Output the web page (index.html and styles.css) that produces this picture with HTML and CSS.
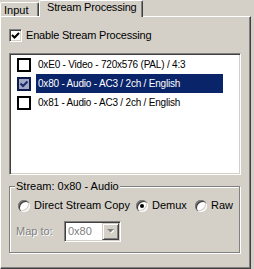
FILE: index.html
```html
<!DOCTYPE html>
<html lang="en">
<head>
    <meta charset="UTF-8">
    <title>Stream Processing</title>
    <link rel="stylesheet" href="styles.css">
</head>
<body>

<div class="tabs">
    <div class="tab tab-input">Input</div>
    <div class="tab tab-active">Stream Processing</div>
</div>

<div class="page">
    <div class="check-row">
        <span class="checkbox">
            <svg width="9" height="9" viewBox="0 0 9 9"><path d="M1 4 L3.5 6.5 L8 2" fill="none" stroke="#000" stroke-width="2"/></svg>
        </span>
        <span class="check-label">Enable Stream Processing</span>
    </div>

    <div class="list">
        <div class="row">
            <span class="state"></span>
            <span class="row-text">0xE0 - Video - 720x576 (PAL) / 4:3</span>
        </div>
        <div class="row">
            <span class="state state-on">
                <svg width="10" height="10" viewBox="0 0 10 10"><path d="M1.5 4.5 L4 7 L8.5 2.5" fill="none" stroke="#1c2c6c" stroke-width="2"/></svg>
            </span>
            <span class="row-text sel">0x80 - Audio - AC3 / 2ch / English</span>
        </div>
        <div class="row">
            <span class="state"></span>
            <span class="row-text">0x81 - Audio - AC3 / 2ch / English</span>
        </div>
    </div>

    <div class="group">
        <span class="group-title">Stream: 0x80 - Audio</span>
        <div class="radio-row">
            <label class="option opt-direct"><span class="radio"></span>Direct Stream Copy</label>
            <label class="option opt-demux"><span class="radio on"></span>Demux</label>
            <label class="option"><span class="radio"></span>Raw</label>
        </div>
        <div class="map-row">
            <span class="map-label disabled">Map to:</span>
            <div class="combo">
                <span class="combo-text disabled">0x80</span>
                <span class="combo-btn">
                    <svg width="7" height="5" viewBox="0 0 7 5"><path d="M1 1 H8 L4.5 4.5 Z" fill="#fff"/><path d="M0 0 H7 L3.5 3.5 Z" fill="#808080"/></svg>
                </span>
            </div>
        </div>
    </div>
</div>

</body>
</html>
```

FILE: styles.css
```css
body{
    margin: 0;
    width: 254px;
    height: 269px;
    overflow: hidden;
    background: #d4d0c8;
    font: 11px/13px "Liberation Sans", Arial, sans-serif;
    color: #000;
}
.tabs{
    display: flex;
    align-items: flex-end;
    height: 16px;
}
.tab{
    box-sizing: border-box;
    border-top: 1px solid #fff;
    border-left: 1px solid #fff;
    border-right: 1px solid #404040;
    border-radius: 2px 2px 0 0;
    box-shadow: inset -1px 0 0 #808080;
    white-space: nowrap;
}
.tab-input{
    width: 39px;
    height: 14px;
    padding: 1px 0 0 3px;
}
.tab-active{
    position: relative;
    z-index: 1;
    width: 104px;
    height: 17px;
    margin-bottom: -1px;
    padding-left: 7px;
    background: #d4d0c8;
    letter-spacing: -0.2px;
}
.page{
    box-sizing: border-box;
    width: 251px;
    height: 253px;
    border-top: 1px solid #fff;
    border-left: 1px solid #fff;
    border-right: 1px solid #404040;
    border-bottom: 1px solid #404040;
    box-shadow: inset -1px -1px 0 #808080;
    padding: 12px 0 0 8px;
}
.check-row{
    display: flex;
    align-items: center;
    height: 13px;
}
.checkbox{
    box-sizing: border-box;
    width: 13px;
    height: 13px;
    border: 1px solid;
    border-color: #808080 #fff #fff #808080;
    box-shadow: inset 1px 1px 0 #404040, inset -1px -1px 0 #d4d0c8;
    background: #fff;
    display: flex;
    align-items: center;
    justify-content: center;
}
.check-label{
    margin-left: 4px;
    letter-spacing: -0.2px;
}
.list{
    box-sizing: border-box;
    width: 232px;
    height: 122px;
    margin-top: 11px;
    border: 1px solid;
    border-color: #808080 #fff #fff #808080;
    box-shadow: inset 1px 1px 0 #404040, inset -1px -1px 0 #d4d0c8;
    background: #fff;
    padding: 1px;
}
.row{
    display: flex;
    align-items: center;
    height: 19px;
}
.state{
    box-sizing: border-box;
    width: 14px;
    height: 14px;
    margin-left: 6px;
    border: 2px solid #000;
    background: #fff;
    display: flex;
    align-items: center;
    justify-content: center;
}
.state-on{
    border-color: #0c1a4c;
    background: #a2a8c6;
}
.row-text{
    box-sizing: border-box;
    width: 187px;
    height: 19px;
    margin-left: 5px;
    padding-left: 2px;
    font-size: 10px;
    line-height: 19px;
    letter-spacing: -0.2px;
    white-space: nowrap;
}
.sel{
    background: #0a246a;
    color: #fff;
}
.group{
    position: relative;
    box-sizing: border-box;
    width: 231px;
    margin-top: 11px;
    border: 1px solid #808080;
    box-shadow: 1px 1px 0 #fff, inset 1px 1px 0 #fff;
    padding: 12px 0 10px 6px;
}
.group-title{
    position: absolute;
    top: -7px;
    left: 5px;
    padding: 0 1px;
    background: #d4d0c8;
}
.radio-row{
    display: flex;
    align-items: center;
    height: 13px;
    margin-left: 2px;
}
.option{
    display: flex;
    align-items: center;
    white-space: nowrap;
}
.opt-direct{
    width: 118px;
}
.opt-demux{
    width: 59px;
}
.radio{
    box-sizing: border-box;
    width: 12px;
    height: 12px;
    margin-right: 4px;
    border-radius: 50%;
    background: #fff;
    box-shadow: inset 1px 1px 0 #808080, inset 2px 2px 0 #404040, inset -1px -1px 0 #fff, inset -2px -2px 0 #d4d0c8;
    display: flex;
    align-items: center;
    justify-content: center;
}
.radio.on::after{
    content: "";
    width: 4px;
    height: 4px;
    border-radius: 50%;
    background: #000;
}
.map-row{
    display: flex;
    align-items: center;
    height: 21px;
    margin-top: 9px;
}
.disabled{
    color: #808080;
    text-shadow: 1px 1px 0 #fff;
}
.map-label{
    width: 48px;
}
.combo{
    box-sizing: border-box;
    width: 57px;
    height: 21px;
    border: 1px solid;
    border-color: #808080 #fff #fff #808080;
    box-shadow: inset 1px 1px 0 #404040, inset -1px -1px 0 #d4d0c8;
    background: #fff;
    padding: 1px;
    display: flex;
    align-items: center;
}
.combo-text{
    flex: 1;
    padding-left: 2px;
}
.combo-btn{
    box-sizing: border-box;
    width: 17px;
    height: 17px;
    background: #d4d0c8;
    border: 1px solid;
    border-color: #d4d0c8 #404040 #404040 #d4d0c8;
    box-shadow: inset 1px 1px 0 #fff, inset -1px -1px 0 #808080;
    display: flex;
    align-items: center;
    justify-content: center;
}
```
